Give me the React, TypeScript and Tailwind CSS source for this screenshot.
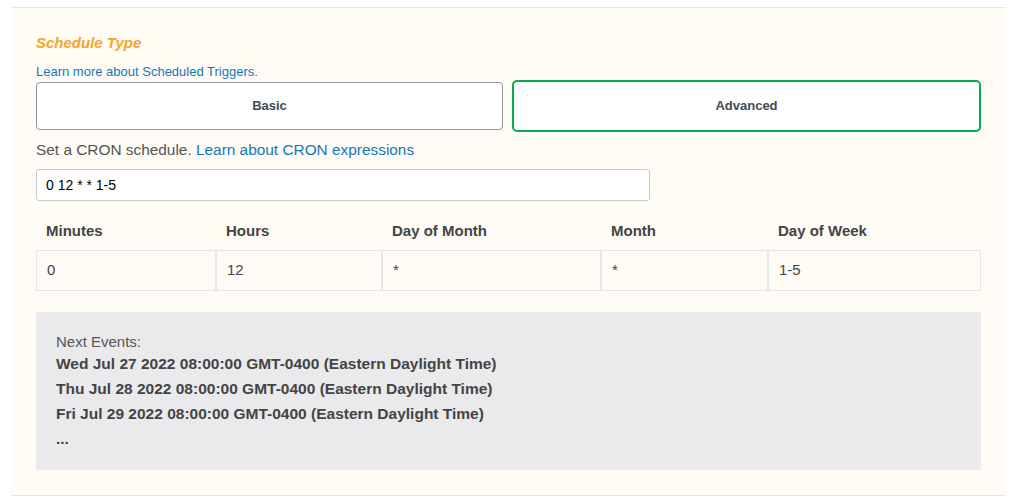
const columns = [
  { label: 'Minutes', value: '0', width: 'w-[180px]' },
  { label: 'Hours', value: '12', width: 'w-[166px]' },
  { label: 'Day of Month', value: '*', width: 'w-[219px]' },
  { label: 'Month', value: '*', width: 'w-[167px]' },
  { label: 'Day of Week', value: '1-5', width: 'w-[213px]' },
];

const nextEvents = [
  'Wed Jul 27 2022 08:00:00 GMT-0400 (Eastern Daylight Time)',
  'Thu Jul 28 2022 08:00:00 GMT-0400 (Eastern Daylight Time)',
  'Fri Jul 29 2022 08:00:00 GMT-0400 (Eastern Daylight Time)',
];

export default function App() {
  return (
    <div className="w-full h-[503px] bg-white pt-[7px] pl-[11px] pr-[6px] font-['Liberation_Sans',Arial,sans-serif]">
      <section className="bg-[#fffbf5] border-t border-b border-[#e6e6e6] px-[25px] pt-[25px] pb-[25px]">
        <h4 className="text-[15px] leading-[20px] font-bold italic text-[#f7a42c]">Schedule Type</h4>
        <a className="block mt-[10px] text-[13px] leading-[17px] text-[#1477bb]">
          Learn more about Scheduled Triggers.
        </a>

        <div className="flex items-center justify-between h-[52px]">
          <button className="w-[467px] h-[48px] bg-white border border-[#8c979e] rounded-[4px] text-[13px] font-bold text-[#3f4b54]">
            Basic
          </button>
          <button className="w-[469px] h-[52px] bg-white border-2 border-[#0aaa55] rounded-[5px] text-[13px] font-bold text-[#3f4b54]">
            Advanced
          </button>
        </div>

        <p className="mt-[8px] text-[15.4px] leading-[20px] text-[#555]">
          Set a CRON schedule. <a className="text-[#1477bb]">Learn about CRON expressions</a>
        </p>

        <input
          readOnly
          value="0 12 * * 1-5"
          className="block mt-[9px] w-[614px] h-[32px] px-[9px] bg-white border border-[#c8c8c8] rounded-[3px] text-[14px] text-black outline-none"
        />

        <div className="flex mt-[20px]">
          {columns.map((c) => (
            <div key={c.label} className={`${c.width} px-[10px] text-[15px] leading-[20px] font-bold text-[#444]`}>
              {c.label}
            </div>
          ))}
        </div>
        <div className="flex mt-[9px]">
          {columns.map((c) => (
            <div
              key={c.label}
              className={`${c.width} h-[41px] flex items-center px-[10px] border border-[#e6e6e6] text-[15px] text-[#444]`}
            >
              {c.value}
            </div>
          ))}
        </div>

        <div className="mt-[21px] bg-[#eaeaec] pl-[20px] pt-[21px] pb-[19px]">
          <div className="text-[15px] leading-[18px] text-[#555]">Next Events:</div>
          {nextEvents.map((e) => (
            <div key={e} className="text-[15.5px] leading-[25px] font-bold text-[#444]">
              {e}
            </div>
          ))}
          <div className="text-[15.5px] leading-[25px] font-bold text-[#444]">...</div>
        </div>
      </section>
    </div>
  );
}
